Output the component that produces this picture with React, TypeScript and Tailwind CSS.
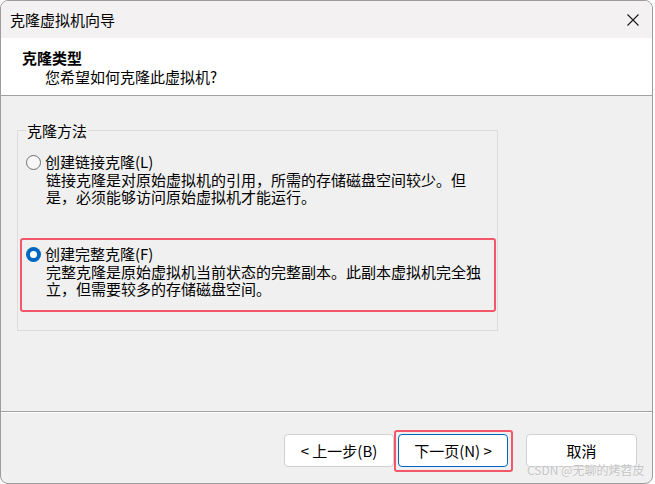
import React from "react";

function Radio({ checked }: { checked?: boolean }) {
  if (checked) {
    return (
      <span className="w-[15px] h-[15px] rounded-full bg-[#0067c0] flex items-center justify-center shrink-0">
        <span className="w-[7px] h-[7px] rounded-full bg-white" />
      </span>
    );
  }
  return <span className="w-[15px] h-[15px] rounded-full border border-[#6e6e6e] bg-[#f7f7f7] shrink-0" />;
}

export default function App() {
  return (
    <div className="w-[655px] h-[484px] bg-white relative font-['Noto_Sans_CJK_SC','Liberation_Sans',sans-serif] text-[15px] text-black">
      <div className="w-[653px] h-[484px] border border-[#9c9c9c] rounded-[8px] overflow-hidden flex flex-col bg-[#f0f0f0]">
        {/* Title bar */}
        <div className="h-[37px] shrink-0 bg-[#f3f1f2] flex items-center justify-between pl-[9px] pr-[13px]">
          <span className="leading-[19px]">克隆虚拟机向导</span>
          <svg width="12" height="12" viewBox="0 0 12 12" fill="none" stroke="#1a1a1a" strokeWidth="1.1">
            <path d="M0.5 0.5 L11.5 11.5 M11.5 0.5 L0.5 11.5" />
          </svg>
        </div>
        {/* Header */}
        <div className="h-[58px] shrink-0 bg-white border-b border-[#a0a0a0] pl-[21px] pt-[10px]">
          <div className="font-bold leading-[19px]">克隆类型</div>
          <div className="ml-[23px] leading-[19px]">您希望如何克隆此虚拟机?</div>
        </div>
        {/* Body */}
        <div className="flex-1 pt-[34px] pl-[16px]">
          <div className="relative w-[481px] h-[201px] border border-[#dcdcdc]">
            <span className="absolute left-[8px] -top-[10px] px-[1px] bg-[#f0f0f0] leading-[19px]">克隆方法</span>
            <div className="pl-[8px] pt-[22px]">
              <div className="flex items-center h-[18px] gap-[4px]">
                <Radio />
                <span className="leading-[18px]">创建链接克隆(L)</span>
              </div>
              <div className="pl-[20px] leading-[17px]">
                <div>链接克隆是对原始虚拟机的引用，所需的存储磁盘空间较少。但</div>
                <div>是，必须能够访问原始虚拟机才能运行。</div>
              </div>
            </div>
            <div className="mt-[33px] ml-[2px] w-[476px] border-2 border-[#f4566a] rounded-[3px] pt-[5px] pb-[13px] pl-[4px]">
              <div className="flex items-center h-[18px] gap-[4px]">
                <Radio checked />
                <span className="leading-[18px]">创建完整克隆(F)</span>
              </div>
              <div className="pl-[20px] leading-[17px]">
                <div>完整克隆是原始虚拟机当前状态的完整副本。此副本虚拟机完全独</div>
                <div>立，但需要较多的存储磁盘空间。</div>
              </div>
            </div>
          </div>
        </div>
        {/* Footer */}
        <div className="h-[72px] shrink-0 border-t border-[#a0a0a0]">
          <div className="h-px bg-white" />
          <div className="flex justify-end items-start pr-[15px] pt-[17px]">
            <button className="mt-[4px] w-[110px] h-[33px] bg-white border border-[#d0d0d0] rounded-[4px] leading-[19px]">
              &lt; 上一步(B)
            </button>
            <div className="border-2 border-[#f4566a] rounded-[3px] pt-[2px] pl-[2px] pr-[3px] pb-[3px]">
              <button className="w-[110px] h-[33px] bg-white border border-[#0067c0] rounded-[4px] leading-[19px]">
                下一页(N) &gt;
              </button>
            </div>
            <button className="ml-[13px] mt-[4px] w-[111px] h-[33px] bg-white border border-[#d0d0d0] rounded-[4px] leading-[19px]">
              取消
            </button>
          </div>
        </div>
      </div>
      <span className="absolute left-[527px] top-[462px] text-[12px] leading-[15px] text-[#c4c4c4] [text-shadow:0_0_2px_#ffffff]">
        CSDN @无聊的烤苕皮
      </span>
    </div>
  );
}
